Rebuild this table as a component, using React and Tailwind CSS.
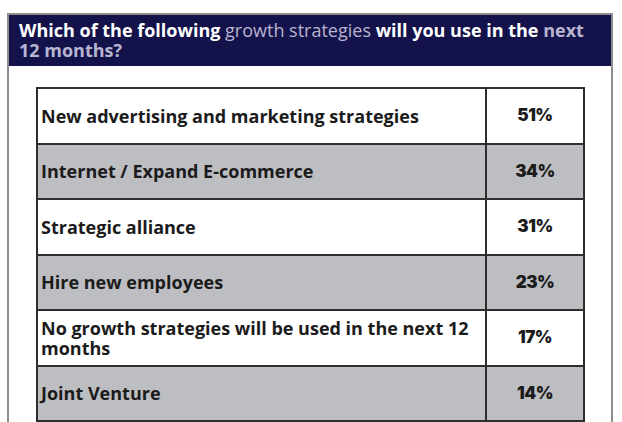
import React from "react";

const rows = [
  { label: "New advertising and marketing strategies", value: "51%", shaded: false },
  { label: "Internet / Expand E-commerce", value: "34%", shaded: true },
  { label: "Strategic alliance", value: "31%", shaded: false },
  { label: "Hire new employees", value: "23%", shaded: true },
  { label: "No growth strategies will be used in the next 12 months", value: "17%", shaded: false },
  { label: "Joint Venture", value: "14%", shaded: true },
];

export default function App() {
  return (
    <div className="w-[622px] h-[422px] overflow-hidden bg-white pt-[13px] pl-[7px] font-['Open_Sans',sans-serif]">
      <div className="w-[606px] h-[420px] border-2 border-[#8d8d8d] border-b-0">
        <div className="bg-[#14124a] px-[10px] pt-[5px] pb-[6px] text-[18px] leading-[20px] font-bold text-white">
          Which of the following <span className="font-normal text-[#b7b5cf]">growth strategies</span> will you use in the{" "}
          <span className="text-[#b7b5cf]">next 12 months?</span>
        </div>
        <div className="pl-[27px] pt-[21px]">
          <table className="w-[549px] border-collapse border-2 border-[#2e2e2e] text-[#1b1b1b]">
            <tbody>
              {rows.map((r, i) => (
                <tr key={i} className={r.shaded ? "bg-[#bdbec1]" : "bg-white"}>
                  <td className="h-[55.5px] border-2 border-[#2e2e2e] pl-[3px] pr-2 text-[18px] leading-[20px] font-bold">
                    {r.label}
                  </td>
                  <td className="w-[98px] border-2 border-[#2e2e2e] text-center font-['Inter',sans-serif] text-[17px] font-black tracking-[-0.5px]">
                    {r.value}
                  </td>
                </tr>
              ))}
            </tbody>
          </table>
        </div>
      </div>
    </div>
  );
}
